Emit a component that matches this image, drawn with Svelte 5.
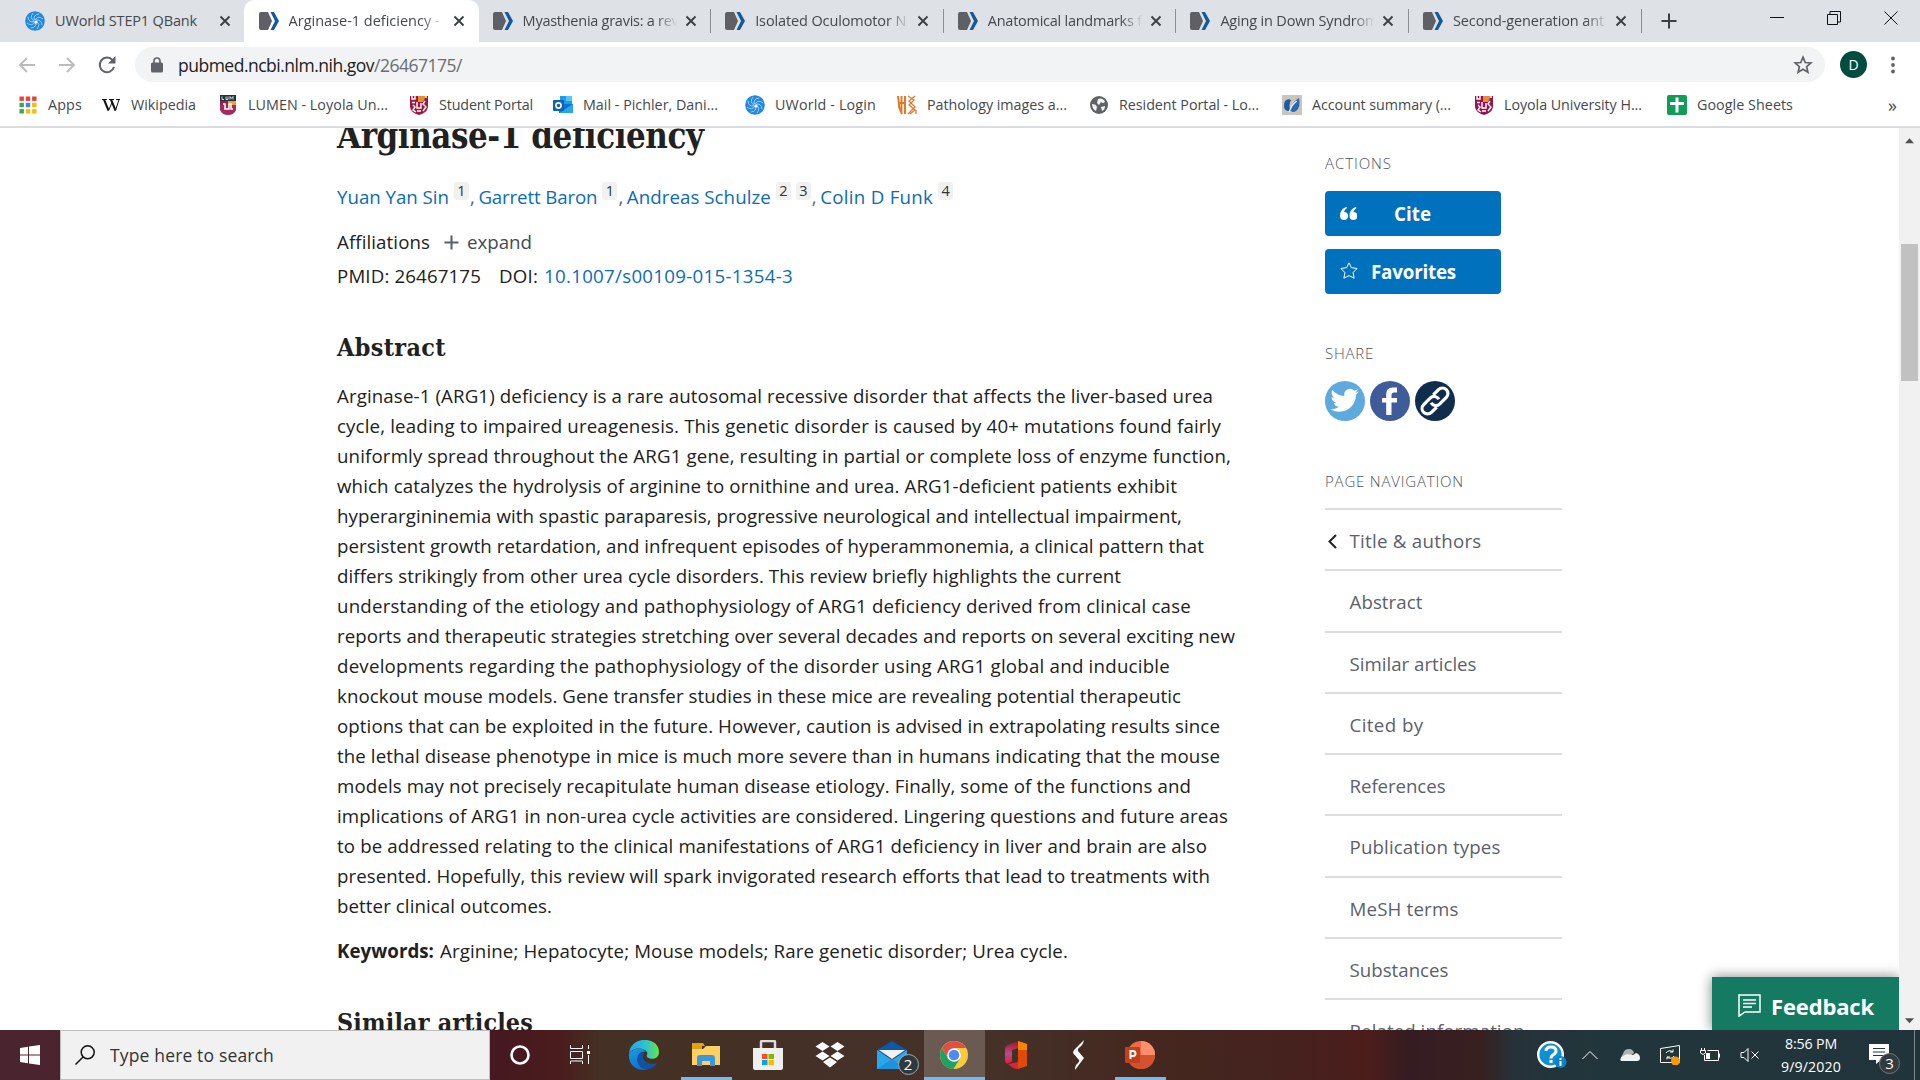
<script>
  // Spreads a run of text over a given width by adjusting its letter spacing.
  function fit(node, width) {
    node.style.letterSpacing = '0px';
    const natural = node.getBoundingClientRect().width;
    const count = node.textContent.length;
    if (count > 0) node.style.letterSpacing = (width - natural) / count + 'px';
  }

  const tabs = [
    { title: 'UWorld STEP1 QBank', w: 142, icon: 'uworld' },
    { title: 'Arginase-1 deficiency -', w: 151, icon: 'ncbi', active: true },
    { title: 'Myasthenia gravis: a rev', w: 156, icon: 'ncbi' },
    { title: 'Isolated Oculomotor N', w: 151, icon: 'ncbi' },
    { title: 'Anatomical landmarks f', w: 154, icon: 'ncbi' },
    { title: 'Aging in Down Syndrom', w: 158, icon: 'ncbi' },
    { title: 'Second-generation ant', w: 151, icon: 'ncbi' }
  ];

  const bookmarks = [
    { t: 'Apps', x: 83, w: 34, icon: 'apps' },
    { t: 'Wikipedia', x: 117, w: 65, icon: 'wiki' },
    { t: 'LUMEN - Loyola Un...', x: 191, w: 140, icon: 'lumen' },
    { t: 'Student Portal', x: 144, w: 94, icon: 'student' },
    { t: 'Mail - Pichler, Dani...', x: 192, w: 135, icon: 'mail' },
    { t: 'UWorld - Login', x: 152, w: 101, icon: 'uworld' },
    { t: 'Pathology images a...', x: 192, w: 140, icon: 'path' },
    { t: 'Resident Portal - Lo...', x: 193, w: 140, icon: 'globe' },
    { t: 'Account summary (...', x: 192, w: 139, icon: 'account' },
    { t: 'Loyola University H...', x: 193, w: 138, icon: 'loyola' },
    { t: 'Google Sheets', x: 130, w: 96, icon: 'sheets' }
  ];

  const authors = [
    { name: 'Yuan Yan Sin', w: 112, refs: ['1'] },
    { name: 'Garrett Baron', w: 119, refs: ['1'] },
    { name: 'Andreas Schulze', w: 144, refs: ['2', '3'] },
    { name: 'Colin D Funk', w: 113, refs: ['4'] }
  ];

  const abstract = [
    ['Arginase-1 (ARG1) deficiency is a rare autosomal recessive disorder that affects the liver-based urea', 876],
    ['cycle, leading to impaired ureagenesis. This genetic disorder is caused by 40+ mutations found fairly', 884],
    ['uniformly spread throughout the ARG1 gene, resulting in partial or complete loss of enzyme function,', 894],
    ['which catalyzes the hydrolysis of arginine to ornithine and urea. ARG1-deficient patients exhibit', 840],
    ['hyperargininemia with spastic paraparesis, progressive neurological and intellectual impairment,', 845],
    ['persistent growth retardation, and infrequent episodes of hyperammonemia, a clinical pattern that', 867],
    ['differs strikingly from other urea cycle disorders. This review briefly highlights the current', 784],
    ['understanding of the etiology and pathophysiology of ARG1 deficiency derived from clinical case', 854],
    ['reports and therapeutic strategies stretching over several decades and reports on several exciting new', 898],
    ['developments regarding the pathophysiology of the disorder using ARG1 global and inducible', 833],
    ['knockout mouse models. Gene transfer studies in these mice are revealing potential therapeutic', 844],
    ['options that can be exploited in the future. However, caution is advised in extrapolating results since', 883],
    ['the lethal disease phenotype in mice is much more severe than in humans indicating that the mouse', 883],
    ['models may not precisely recapitulate human disease etiology. Finally, some of the functions and', 854],
    ['implications of ARG1 in non-urea cycle activities are considered. Lingering questions and future areas', 891],
    ['to be addressed relating to the clinical manifestations of ARG1 deficiency in liver and brain are also', 870],
    ['presented. Hopefully, this review will spark invigorated research efforts that lead to treatments with', 873],
    ['better clinical outcomes.', 215]
  ];

  const nav = [
    ['Title & authors', 132],
    ['Abstract', 73],
    ['Similar articles', 127],
    ['Cited by', 74],
    ['References', 96],
    ['Publication types', 151],
    ['MeSH terms', 109],
    ['Substances', 99],
    ['Related information', 175]
  ];

  const spokes = [0, 45, 90, 135, 180, 225, 270, 315];
</script>

{#snippet siteIcon(kind)}
  <svg class="fav" viewBox="0 0 20 20">
    {#if kind === 'uworld'}
      <circle cx="10" cy="10" r="9.8" fill="#2088e0" />
      {#each spokes as a}
        <path d="M10 9q3-5 8-1" transform="rotate({a} 10 10)" fill="none" stroke="#d3ebff" stroke-width=".7" />
      {/each}
      <circle cx="11" cy="11" r="1.600" fill="#fff" />
    {:else if kind === 'ncbi'}
      <path d="M2 1h7l4 9-4 9H2q-2 0-2-2V3q0-2 2-2z" fill="#5f6065" />
      <path d="M11.500 1H15l5 9-5 9h-3.500l4.500-9z" fill="#135a9c" />
    {:else if kind === 'apps'}
      {#each [['#ea4335', '#ea4335', '#ea4335'], ['#34a853', '#4285f4', '#fbbc04'], ['#34a853', '#fbbc04', '#fbbc04']] as row, r}
        {#each row as c, i}<rect x={1.500 + i * 6.300} y={1.500 + r * 6.300} width="4.400" height="4.400" fill={c} />{/each}
      {/each}
    {:else if kind === 'wiki'}
      <path d="M1 4.500h5M8 4.500h5M15 4.500h4" stroke="#111" stroke-width="1.200" />
      <path d="M3 4.500l4.500 11M10 4.500l4.500 11" fill="none" stroke="#111" stroke-width="2" />
      <path d="M7.500 15.500l4-9M14.500 15.500L18 4.500" fill="none" stroke="#111" stroke-width="1" />
    {:else if kind === 'lumen'}
      <path d="M2 0h16v6H2z" fill="#26323a" /><path d="M4 1.500v3h2M8 1.500v3h2v-3M12 4.500v-3l1.500 2 1.500-2v3" stroke="#cfd6da" fill="none" />
      <path d="M2 6h8v6H2z" fill="#9a1c50" /><path d="M10 6h8v6h-8z" fill="#e8a33c" />
      <path d="M2 10h16v5q-2 5-8 5t-8-5z" fill="#a52a5b" /><path d="M5 9h2v5h4V9h2v5h2" stroke="#fff" fill="none" stroke-width="1.500" />
    {:else if kind === 'student' || kind === 'loyola'}
      <path d="M1 1h18v11q-1 6-9 8-8-2-9-8z" fill={kind === 'student' ? '#a3163f' : '#98124f'} />
      <path d="M9 1h8l-3 6H9z" fill="#e5912b" />
      <path d="M3 0v4h3V0M3 7.500h3M4 10l2 2-2 3 3 2M8 7v6h4V8M16 6l-2 3 3 3-3 4M8 16h4M17 0v3" fill="none" stroke="#fff" stroke-width="1.400" />
    {:else if kind === 'mail'}
      <path d="M7 1h12v9H7z" fill="#1f9be8" /><path d="M13 1h6v5h-6z" fill="#50c8f8" /><path d="M6 9l14 0v9H6z" fill="#1272c8" /><path d="M6 18l14-9v9z" fill="#28a8ea" />
      <rect y="5" width="11" height="11" rx="1" fill="#0a64b8" /><circle cx="5.500" cy="10.500" r="2.600" fill="none" stroke="#fff" stroke-width="1.600" />
    {:else if kind === 'path'}
      <path d="M1 1l1 8v3l3 7M4.500 1v17M8 1v18M1 8h7" fill="none" stroke="#e07a2c" stroke-width="2" />
      <path d="M11 1l6 4-5 5 6 5-5 4M18 1l-6 5 6 6-7 7M19 15v4" fill="none" stroke="#e07a2c" stroke-width="1.300" />
    {:else if kind === 'globe'}
      <circle cx="10" cy="10" r="9" fill="#5f6368" />
      <path d="M3 9q4 0 5 3l-1 4q-4-2-4-7zM9 4q5-2 7 3-2 2-4 0l-2 3-2-2zM12 12l4-1q0 4-3 5z" fill="#f3f4f5" />
    {:else if kind === 'account'}
      <path d="M0 0h20v20H0z" fill="#cbc4bb" />
      <path d="M3 6q3-3 6-1-3 6 0 11-7 1-7-5 0-3 1-5z" fill="#1b5aa6" />
      <path d="M9 16q0-9 8-13 2 9-3 13-3 2-5 0z" fill="#2a68b4" />
      <path d="M7 17q3-8 8-11" stroke="#fff" stroke-width="1.200" fill="none" />
    {:else if kind === 'sheets'}
      <rect width="20" height="20" rx="2" fill="#109d58" /><path d="M8.500 2.500h3v4.500H17v3h-5.500v7.500h-3V10H3V7h5.500z" fill="#fff" />
    {/if}
  </svg>
{/snippet}

<div class="screen">
  <header class="tabstrip">
    {#each tabs as tab, i}
      <div class="tab" class:active={tab.active} class:divided={i > 1}>
        {@render siteIcon(tab.icon)}
        <div class="tabtitle" class:fade={i > 0}><span use:fit={tab.w}>{tab.title}</span></div>
        <svg class="close" viewBox="0 0 12 12"><path d="M1.500 1.500l9 9M10.500 1.500l-9 9" /></svg>
      </div>
    {/each}
    <svg class="newtab" viewBox="0 0 16 16"><path d="M8 .5v15M.5 8h15" /></svg>
    <div class="winctl">
      <svg viewBox="0 0 14 14"><path d="M0 6.500h14" /></svg>
      <svg viewBox="0 0 14 14"><path d="M.5 3.500h10v10H.5zM3 3.500v-3h10.500v10.500h-3" /></svg>
      <svg viewBox="0 0 14 14"><path d="M.5 .5l13 13M13.500 .5l-13 13" /></svg>
    </div>
  </header>

  <div class="toolbar">
    <svg class="navicon" viewBox="0 0 18 18"><path d="M17 9H2M9 2L2 9l7 7" stroke="#babcbe" /></svg>
    <svg class="navicon" viewBox="0 0 18 18"><path d="M1 9h15M9 2l7 7-7 7" stroke="#babcbe" /></svg>
    <svg class="navicon" viewBox="0 0 18 18"><path d="M16 11A7.300 7.300 0 1 1 14.500 4" stroke="#5f6368" /><path d="M17.500 0v7.500H10z" fill="#5f6368" /></svg>
    <div class="omnibox">
      <svg class="lock" viewBox="0 0 12 16"><rect y="5.500" width="12" height="10" rx="1.500" fill="#5f6368" /><path d="M3 6V4a3 3 0 0 1 6 0v2" fill="none" stroke="#5f6368" stroke-width="1.600" /></svg>
      <span class="url" use:fit={284}>pubmed.ncbi.nlm.nih.gov<i>/26467175/</i></span>
      <svg class="star" viewBox="0 0 20 20"><path d="M10 2.200l2.200 5.300 5.700.5-4.300 3.700 1.300 5.600-4.900-3-4.900 3 1.300-5.600L2.100 8l5.700-.5z" /></svg>
    </div>
    <div class="avatar">D</div>
    <svg class="dots" viewBox="0 0 4 18"><circle cx="2" cy="2.500" r="1.900" /><circle cx="2" cy="9" r="1.900" /><circle cx="2" cy="15.500" r="1.900" /></svg>
  </div>

  <div class="bookmarks">
    {#each bookmarks as b}
      <div class="bm" style="width:{b.x}px">{@render siteIcon(b.icon)}<span use:fit={b.w}>{b.t}</span></div>
    {/each}
    <span class="more">»</span>
  </div>

  <div class="viewport">
    <main>
      <h1><span use:fit={364}>Arginase-1 deficiency</span></h1>
      <div class="authors">
        {#each authors as a, i}
          <a href="#top" use:fit={a.w}>{a.name}</a>{#each a.refs as r}<sup>{r}</sup>{/each}{#if i < 3}<b>,</b>{/if}
        {/each}
      </div>
      <div class="affil"><span use:fit={93}>Affiliations</span>
        <svg viewBox="0 0 16 16"><path d="M8 .5v15M.5 8h15" /></svg>
        <em use:fit={65}>expand</em></div>
      <div class="ids"><span use:fit={144}>PMID: 26467175</span><span class="doi" use:fit={39}>DOI:</span><a href="#doi" use:fit={249}>10.1007/s00109-015-1354-3</a></div>
      <h2><span use:fit={109}>Abstract</span></h2>
      <div class="abstract">
        {#each abstract as [text, w]}<div><span use:fit={w}>{text}</span></div>{/each}
      </div>
      <div class="keywords"><strong use:fit={97}>Keywords:</strong><span use:fit={628}>Arginine; Hepatocyte; Mouse models; Rare genetic disorder; Urea cycle.</span></div>
      <h2 class="similar"><span use:fit={196}>Similar articles</span></h2>
    </main>

    <aside>
      <h3><span use:fit={67}>ACTIONS</span></h3>
      <button>
        <svg viewBox="0 0 17 14"><path d="M6.500 0C2.500 1 0 4.500 0 9a4 4 0 1 0 4-4q.5-2.500 3-4zM16 0C12 1 9.500 4.500 9.500 9a4 4 0 1 0 4-4q.5-2.500 3-4z" fill="#fff" /></svg>
        <span use:fit={37}>Cite</span>
      </button>
      <button>
        <svg class="fstar" viewBox="0 0 18 17"><path d="M9 .8l2.400 4.900 5.700.8-4 4 1 5.700L9 13.600l-5.100 2.600 1-5.700-4-4 5.700-.8z" fill="none" stroke="#fff" /></svg>
        <span use:fit={85}>Favorites</span>
      </button>
      <h3 class="share"><span use:fit={49}>SHARE</span></h3>
      <div class="social">
        <svg viewBox="0 0 40 40"><circle cx="20" cy="20" r="20" fill="#5ea9dd" /><path transform="translate(5.500 5.200) scale(1.180)" d="M23.950 4.570a10 10 0 0 1-2.820.77 4.960 4.960 0 0 0 2.160-2.720c-.95.550-2 .950-3.130 1.180a4.920 4.920 0 0 0-8.380 4.480C7.690 8.090 4.070 6.130 1.640 3.160a4.800 4.800 0 0 0-.67 2.480c0 1.710.87 3.210 2.190 4.100a4.900 4.900 0 0 1-2.230-.62v.06a4.920 4.920 0 0 0 3.950 4.830 5 5 0 0 1-2.210.08 4.940 4.940 0 0 0 4.600 3.420A9.870 9.870 0 0 1 0 19.540a14 14 0 0 0 7.550 2.210c9.050 0 14-7.500 14-13.980l-.02-.63a9.900 9.900 0 0 0 2.460-2.550z" fill="#fff" /></svg>
        <svg viewBox="0 0 40 40"><circle cx="20" cy="20" r="20" fill="#3e5b9a" /><path d="M27 6.500v5h-3q-2.500 0-2.500 2.500v3H27v4.500h-5.500V34h-5.300V21.500H12V17h4.200v-4q0-6.500 6.500-6.500z" fill="#fff" /></svg>
        <svg viewBox="0 0 40 40"><circle cx="20" cy="20" r="20" fill="#112d4e" /><g transform="rotate(-45 20 20)" fill="none" stroke="#fff" stroke-width="3.200"><path d="M17 25.500H9.500a5.500 5.500 0 0 1 0-11H19a5.500 5.500 0 0 1 5 7" /><path d="M23 14.500h7.500a5.500 5.500 0 0 1 0 11H21a5.500 5.500 0 0 1-5-7" /></g></svg>
      </div>
      <h3 class="pn"><span use:fit={139}>PAGE NAVIGATION</span></h3>
      <nav>
        {#each nav as [label, w], i}
          <div class="navitem">
            <svg viewBox="0 0 9 15">{#if i === 0}<path d="M8 1L1.500 7.500 8 14" />{/if}</svg>
            <span use:fit={w}>{label}</span>
          </div>
        {/each}
      </nav>
    </aside>

    <div class="scrollbar">
      <svg viewBox="0 0 10 6"><path d="M5 0l5 5.500H0z" /></svg>
      <div class="thumb"></div>
      <svg viewBox="0 0 10 6"><path d="M5 5.500L0 0h10z" /></svg>
    </div>

    <div class="feedback">
      <svg viewBox="0 0 23 23"><path d="M1 1h21v17H7l-6 4.200zM5 6h13M5 9.500h13M5 13h9" /></svg>
      <span use:fit={103}>Feedback</span>
    </div>
  </div>

  <footer>
    <div class="start"><svg viewBox="0 0 20 20"><path d="M0 3l8-1.200v7.700H0zM9 1.600L20 0v9.500H9zM0 10.500h8v7.700L0 17zM9 10.500h11V20L9 18.400z" fill="#fff" /></svg></div>
    <div class="search">
      <svg viewBox="0 0 20 20"><circle cx="12.700" cy="7.300" r="6.500" /><path d="M8 12l-7.500 7.500" /></svg>
      <span use:fit={164}>Type here to search</span>
    </div>
    <div class="apps">
      <div class="app"><svg viewBox="0 0 30 30"><circle cx="15" cy="15" r="8.500" fill="none" stroke="#fff" stroke-width="2.600" /></svg></div>
      <div class="app"><svg viewBox="0 0 30 30"><path d="M3.500 5v3.500h12V5M3.500 11.500h12v7h-12zM3.500 24v-3h12v3M21.500 5v4M21.500 15v9" fill="none" stroke="#fff" /><path d="M20 11h3v3h-3z" fill="#fff" /></svg></div>
      <div class="app"><svg viewBox="0 0 30 30">
        <defs><linearGradient id="eg" x1="0" x2="1"><stop offset="0" stop-color="#22a6e6" /><stop offset=".55" stop-color="#2cc4cf" /><stop offset="1" stop-color="#6be24a" /></linearGradient><linearGradient id="eb" x1="0" y1="0" x2=".6" y2="1"><stop offset="0" stop-color="#1b9de2" /><stop offset="1" stop-color="#0b6fd0" /></linearGradient></defs>
        <path d="M0 14C1-5 30-4 30 12c0 8-9 8-12 5-1-2 1-2 0-5-3-5-15-5-18 2z" fill="url(#eg)" />
        <path d="M0 14c3-6 14-8 17-2-5-1-9 3-8 8 1 6 6 10 10 9.500C8 32-1 25 0 14z" fill="url(#eb)" />
        <path d="M12 12c-6 4-5 14 3 17 6 1 11-2 13-6-8 3-17-3-13-10z" fill="#12539f" /></svg></div>
      <div class="app open"><svg viewBox="0 0 30 30"><path d="M1 3h11l2 3h-3v6H1z" fill="#e2a012" /><path d="M1 9h11l3-3h14v19H1z" fill="#fdd062" /><path d="M6 26V18q0-3 3-3h12q3 0 3 3v8h-5v-5h-8v5z" fill="#3b96dc" /></svg></div>
      <div class="app"><svg viewBox="0 0 30 30"><path d="M8 10V2q0-1 1-1h12q1 0 1 1v8" fill="none" stroke="#ddd" stroke-width="2.500" /><path d="M0 8h30v20q0 2-2 2H2q-2 0-2-2z" fill="#f0f0f0" /><path d="M9 14h5.500v5H9z" fill="#f25022" /><path d="M15.500 14H21v5h-5.500z" fill="#7fba00" /><path d="M9 20h5.500v5H9z" fill="#00a4ef" /><path d="M15.500 20H21v5h-5.500z" fill="#ffb900" /></svg></div>
      <div class="app"><svg viewBox="0 0 30 30"><path d="M7.500 2l7 4.500-7 4.500-7-4.500zM22.500 2l7 4.500-7 4.500-7-4.500zM7.500 11.500l7 4.500-7 4.500-7-4.500zM22.500 11.500l7 4.500-7 4.500-7-4.500zM15 17.500l7 4.500-7 5.500L8 22z" fill="#fff" /></svg></div>
      <div class="app"><svg viewBox="0 0 30 30"><path d="M0 10L15 1l15 9v5H0z" fill="#0c59a6" /><path d="M0 10l15 10 15-10v19H0z" fill="#28a8ea" /><path d="M2 10h26L15 19z" fill="#f1f1f1" /><path d="M0 29l15-10 15 10z" fill="#1e93dc" /></svg><span class="badge">2</span></div>
      <div class="app open current"><svg viewBox="0 0 30 30"><circle cx="15" cy="15" r="14" fill="#fbc93c" /><path d="M2.900 8a14 14 0 0 0 11.500 21l6.600-10.500H9z" fill="#1da261" /><path d="M15 8h12.100A14 14 0 0 0 2.900 8L9 18.500z" fill="#dd5144" /><circle cx="15" cy="15" r="6.800" fill="#fff" /><circle cx="15" cy="15" r="5.300" fill="#4c8bf5" /></svg></div>
      <div class="app"><svg viewBox="0 0 30 30"><defs><linearGradient id="of" x1="0" y1="0" x2="0" y2="1"><stop offset="0" stop-color="#a4121c" /><stop offset=".55" stop-color="#b84a92" /><stop offset="1" stop-color="#e21d38" /></linearGradient></defs><path d="M17 1L7 5Q4 6 4 10v11q0 3 3 2.500l4-2V10l6-2z" fill="url(#of)" /><path d="M17 1l9 3v22l-9 3z" fill="#e04a08" /><path d="M17 1l9 3v6h-9z" fill="#f58400" /><path d="M7 24l10-2v7q-2 .5-5-1z" fill="#e3213d" /></svg></div>
      <div class="app"><svg viewBox="0 0 30 30"><path d="M21 0q-1 5-4 7-3 2-2 4l6 7-9 12q0-5 3-7 2-2 1-3l-6-7q0-2 2-4z" fill="#fff" /></svg></div>
      <div class="app open"><svg viewBox="0 0 30 30"><circle cx="16" cy="15" r="14" fill="#ed6c47" /><path d="M16 1a14 14 0 0 1 14 14H16z" fill="#ff8f6b" /><path d="M2 15h28a14 14 0 0 1-28 0z" fill="#d35230" /><rect y="7" width="15" height="16" rx="1" fill="#c43e1c" /><path d="M5.500 19v-8H8a2.400 2.400 0 0 1 0 5H6" fill="none" stroke="#fff" stroke-width="2" /></svg></div>
    </div>
    <div class="tray">
      <svg class="help" viewBox="0 0 30 28"><circle cx="13.500" cy="13.500" r="12.300" fill="#0c92d4" stroke="#fff" stroke-width="2.400" /><path d="M9 10q0-4 5-4t5 4q0 2-3 4-2 1-2 3.500M14 19v3" fill="none" stroke="#fff" stroke-width="3" /><circle cx="23.500" cy="21" r="6" fill="#0c83c8" stroke="none" /><path d="M23.500 17v2M23.500 20v5" stroke="#fff" stroke-width="2" /></svg>
      <svg class="t16" viewBox="0 0 16 16"><path d="M.5 12L8 4.500l7.500 7.500" /></svg>
      <svg class="t20" viewBox="0 0 20 20"><path d="M3 14q-3-2 0-5 1-5 6-5 4 0 5 4l-8 6z" fill="#aeb4b6" stroke="none" /><path d="M1 16q-2-3 2-5l4-2 6 1 3-2q4 1 4 5 0 3-3 3z" fill="#f1f2f2" stroke="none" /></svg>
      <svg class="t20" viewBox="0 0 20 20"><path d="M.5 3.500L19.500.5v17L.5 17.500zM6 8q3-4 7-1V4.500M13 7h-3M14 11q-3 4-7 1v2.500M7 12h3" /><circle cx="15.500" cy="16" r="4.500" fill="#ff9800" stroke="none" /></svg>
      <svg class="t20" viewBox="0 0 20 20"><path d="M7.500 5.500H18.500v10H4.500V10M19.500 8.500v4M1.500 3v3M4.500 3v3M.5 5.500h5V8L3 9.500.5 8z" /><path d="M6 8h4v6H6z" fill="#fff" stroke="none" /></svg>
      <svg class="t20" viewBox="0 0 20 20"><path d="M1 7.500h3l4-4v13l-4-4H1zM11.500 6.500l7 7M18.500 6.500l-7 7" /></svg>
      <div class="clock"><span use:fit={52}>8:56 PM</span><span use:fit={60}>9/9/2020</span></div>
      <div class="notif"><svg viewBox="0 0 20 20"><path d="M0 0h20v16h-8l-5 4v-4H0z" fill="#fff" stroke="none" /><path d="M4 4.500h12M4 8h12M4 11.500h12" stroke="#22363d" /></svg><span class="badge dark">3</span></div>
    </div>
  </footer>
</div>

<style>
  :global(body) { margin: 0; overflow: hidden; }
  .screen { width: 1920px; height: 1080px; display: flex; flex-direction: column; background: #fff; font-family: 'Open Sans', 'Noto Sans', sans-serif; color: #212121; overflow: hidden; }
  svg { display: block; flex: none; }
  span, a, em, strong { white-space: nowrap; display: inline-block; }
  a { color: #0b6cb8; text-decoration: none; }

  .tabstrip { height: 42px; background: #dee1e6; display: flex; padding-left: 11px; flex: none; }
  .tab { box-sizing: border-box; width: 232.600px; padding: 0 10px 0 14px; display: flex; align-items: center; flex: none; }
  .tab.active { background: #fff; border-radius: 10px 10px 0 0; width: 235px; padding-left: 15px; }
  .tab.divided { background: linear-gradient(#8b8e93, #8b8e93) 100% 9px / 1px 24px no-repeat; }
  .fav { width: 20px; height: 20px; }
  .tabtitle { margin-left: 10px; width: 158px; overflow: hidden; font-size: 14.500px; line-height: 20px; color: #45494d; }
  .fade { -webkit-mask-image: linear-gradient(90deg, #000 84%, transparent 98%); mask-image: linear-gradient(90deg, #000 84%, transparent 98%); }
  .close { width: 12px; height: 12px; margin-left: 6px; fill: none; stroke: #3c4043; stroke-width: 1.900; }
  .divided .close { margin-left: 4px; }
  .newtab { width: 16px; height: 16px; margin: 13px 0 0 19px; stroke: #3c4043; stroke-width: 2; }
  .winctl { display: flex; gap: 43px; margin: 11px 22px 0 auto; }
  .winctl svg { width: 14px; height: 14px; fill: none; stroke: #111; }

  .toolbar { height: 45px; flex: none; display: flex; align-items: center; padding-left: 18px; }
  .navicon { width: 18px; height: 18px; margin-right: 22px; fill: none; stroke-width: 2; }
  .omnibox { width: 1690px; height: 35px; border-radius: 18px; background: #f1f3f4; display: flex; align-items: center; margin-left: -3px; box-sizing: border-box; padding: 0 12px 0 16px; }
  .lock { width: 12px; height: 16px; }
  .url { margin-left: 15px; font-size: 17.500px; line-height: 30px; }
  .url i { font-style: normal; color: #6a6e73; }
  .star { width: 20px; height: 20px; margin-left: auto; fill: none; stroke: #5f6368; stroke-width: 1.700; }
  .avatar { width: 27px; height: 27px; border-radius: 50%; background: #004d40; color: #fff; font-size: 14px; line-height: 27px; text-align: center; margin-left: 15px; }
  .dots { width: 4px; height: 18px; margin-left: 24px; fill: #5f6368; }

  .bookmarks { height: 36px; flex: none; display: flex; align-items: center; padding: 0 23px 3px 18px; border-bottom: 2px solid #dadce0; font-size: 14.300px; line-height: 20px; color: #45494d; }
  .bm { display: flex; align-items: center; gap: 10px; }
  .more { margin-left: auto; font-size: 18px; }

  .viewport { height: 902px; flex: none; position: relative; overflow: hidden; display: flex; font-size: 18.700px; line-height: 30px; }
  main { width: 988px; padding-left: 337px; flex: none; }
  h1, h2 { font-family: 'DejaVu Serif Condensed', 'DejaVu Serif', serif; font-weight: bold; font-stretch: condensed; margin: 0; white-space: nowrap; }
  h1 { font-size: 34.500px; line-height: 40px; margin-top: -12px; }
  h2 { font-size: 24.800px; line-height: 36px; margin-top: 40px; }
  h2.similar { margin-top: 39px; }
  .authors { margin-top: 26px; height: 30px; display: flex; align-items: flex-start; }
  .authors sup { width: 15px; height: 18px; margin-left: 5px; background: #f1f1f1; border-radius: 3px; font-size: 14.500px; line-height: 18px; text-align: center; color: #333; }
  .authors b { font-weight: 400; color: #5b616b; width: 9px; padding-left: 1px; margin-right: -.6px; }
  .affil { margin-top: 15px; display: flex; align-items: center; }
  .affil svg { width: 15px; height: 15px; margin: 0 8px 0 14px; stroke: #5b616b; stroke-width: 2.200; }
  .affil em { font-style: normal; color: #434a54; }
  .ids { margin-top: 4px; display: flex; }
  .doi { margin: 0 6px 0 18px; }
  .ids + h2 { margin-top: 39px; }
  .abstract { margin-top: 15px; }
  .abstract div { height: 30px; }
  .keywords { margin-top: 15px; display: flex; gap: 6px; }

  aside { width: 237px; padding-top: 25px; flex: none; }
  h3 { font-weight: 300; font-size: 15px; line-height: 20px; height: 20px; margin: 0; color: #4d535c; }
  button { display: flex; align-items: center; width: 176px; height: 45px; border: 0; border-radius: 4px; background: #0071bc; color: #fff; font: bold 18.800px/30px 'Open Sans', sans-serif; margin: 13px 0 0; padding: 1px 0 0 15px; }
  h3 + button { margin-top: 18px; }
  button svg { width: 17px; height: 14px; }
  button span { margin-left: 37px; }
  button .fstar { width: 18px; height: 17px; margin-top: -3px; }
  button .fstar + span { margin-left: 13px; }
  .share { margin-top: 49px; }
  .social { margin-top: 18px; display: flex; gap: 5px; }
  .social svg { width: 40px; height: 40px; }
  .pn { margin-top: 50px; margin-bottom: 17px; }
  .navitem { box-sizing: border-box; height: 61.250px; border-top: 2px solid #dcdddf; display: flex; align-items: center; color: #5b616b; padding: 3px 0 0 3px; }
  .navitem svg { width: 9px; height: 15px; margin-right: 12.500px; fill: none; stroke: #212121; stroke-width: 2; }

  .scrollbar { width: 21px; margin-left: auto; background: #f1f1f1; display: flex; flex-direction: column; align-items: center; }
  .scrollbar svg { width: 9px; height: 6px; fill: #505050; margin-top: 10px; }
  .thumb { width: 17px; height: 137px; background: #c1c1c1; margin: 100px 0 0; }
  .scrollbar svg:last-child { margin: auto 0 6px; }
  .feedback { position: absolute; right: 21px; bottom: 0; width: 187px; height: 53px; box-sizing: border-box; padding: 4px 0 0 26px; display: flex; align-items: center; gap: 10px; background: #147a62; box-shadow: 0 0 12px rgba(0, 0, 0, .5); clip-path: inset(-20px 0 0 -20px); color: #fff; font-weight: 700; font-size: 22px; }
  .feedback svg { width: 23px; height: 23px; fill: none; stroke: #fff; stroke-width: 1.500; }

  footer { height: 50px; flex: none; display: flex; color: #fff; background: linear-gradient(90deg, #4a2530 0, #45191f 500px, #4a1c1d 560px, #443024 600px, #443128 1000px, #44271f 1160px, #45221e 1280px, #4b1d1b 1370px, #341c22 1410px, #38201f 1480px, #26323a 1515px, #21363c 1600px, #21343b 1920px); }
  .start { width: 60px; display: flex; align-items: center; padding-left: 20px; box-sizing: border-box; }
  .start svg { width: 20px; height: 20px; }
  .search { width: 430px; box-sizing: border-box; border: 1px solid #bdbdbd; background: #f1f1f1; display: flex; align-items: center; padding-left: 14px; color: #333; font-size: 17.500px; }
  .search svg { width: 20px; height: 20px; margin-right: 15px; fill: none; stroke: #111; stroke-width: 1.500; }
  .apps { display: flex; gap: 1px; margin-left: -.5px; }
  .app { width: 61px; height: 50px; position: relative; display: flex; align-items: center; justify-content: center; box-sizing: border-box; }
  .app svg { width: 30px; height: 30px; }
  .open { background: linear-gradient(#76b9ed, #76b9ed) center bottom / 51px 3px no-repeat; }
  .current { background: linear-gradient(#76b9ed, #76b9ed) center bottom / 61px 3px no-repeat, #6a5a52; }
  .badge { position: absolute; left: 36px; top: 24px; width: 19px; height: 19px; border: 1px solid #aaa; border-radius: 50%; background: #2d3a42; font-size: 15px; line-height: 19px; text-align: center; }
  .tray { margin-left: auto; display: flex; align-items: center; margin-right: 5px; padding-right: 13px; border-right: 1px solid #7d878b; }
  .tray svg { fill: none; stroke: #fff; }
  .help { width: 30px; height: 28px; margin-right: 15px; }
  .t16 { width: 16px; height: 16px; margin-right: 22px; }
  .t20 { width: 20px; height: 20px; margin-right: 20px; }
  .clock { width: 66px; margin-left: -2px; font-size: 14.200px; line-height: 23px; display: flex; flex-direction: column; align-items: center; }
  .notif { position: relative; width: 32px; margin-left: 25px; height: 20px; margin-top: -2px; }
  .notif svg { width: 20px; height: 20px; }
  .dark { left: 10px; top: 9px; background: #333b3f; border-color: #777; }
</style>
